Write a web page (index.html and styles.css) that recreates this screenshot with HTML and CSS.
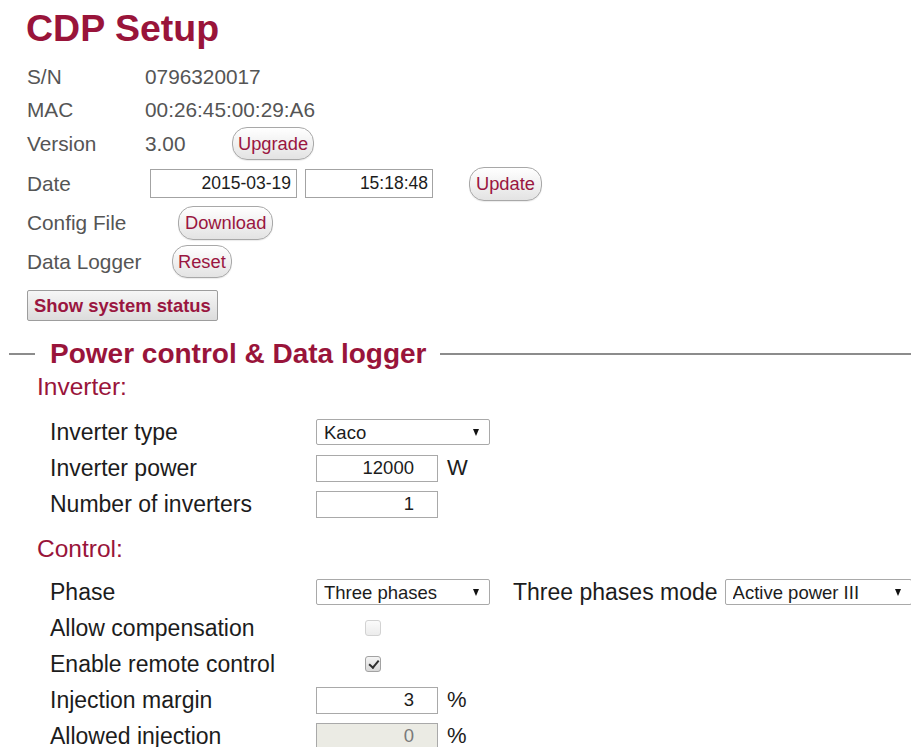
FILE: index.html
```html
<!DOCTYPE html>
<html lang="en">
<head>
<meta charset="utf-8">
<title>CDP Setup</title>
<link rel="stylesheet" href="styles.css">
</head>
<body>
<div class="setup">
  <h1 class="title">CDP Setup</h1>

  <div class="info">
    <div class="info-row">
      <span class="info-label">S/N</span>
      <span class="info-value">0796320017</span>
    </div>
    <div class="info-row">
      <span class="info-label">MAC</span>
      <span class="info-value">00:26:45:00:29:A6</span>
    </div>
    <div class="info-row">
      <span class="info-label">Version</span>
      <span class="info-value version-value">3.00</span>
      <button class="pill pill-short" type="button">Upgrade</button>
    </div>
  </div>

  <div class="actions">
    <div class="action-row">
      <span class="info-label label-date">Date</span>
      <input class="date-field date-day" type="text" value="2015-03-19">
      <input class="date-field date-time" type="text" value="15:18:48">
      <button class="pill pill-update" type="button">Update</button>
    </div>
    <div class="action-row">
      <span class="info-label label-config">Config File</span>
      <button class="pill" type="button">Download</button>
    </div>
    <div class="action-row">
      <span class="info-label label-logger">Data Logger</span>
      <button class="pill pill-short" type="button">Reset</button>
    </div>
  </div>

  <button class="status-btn" type="button">Show system status</button>
</div>

<fieldset class="panel">
  <legend class="panel-title">Power control &amp; Data logger</legend>

  <h3 class="group-title">Inverter:</h3>
  <div class="form-grid">
    <span class="field-label">Inverter type</span>
    <span class="field-control">
      <span class="select-wrap">
        <select class="select">
          <option>Kaco</option>
        </select>
      </span>
    </span>

    <span class="field-label">Inverter power</span>
    <span class="field-control">
      <input class="num-field" type="text" value="12000">
      <span class="unit">W</span>
    </span>

    <span class="field-label">Number of inverters</span>
    <span class="field-control">
      <input class="num-field" type="text" value="1">
    </span>
  </div>

  <h3 class="group-title group-gap">Control:</h3>
  <div class="form-grid form-grid-tight">
    <span class="field-label">Phase</span>
    <span class="field-control">
      <span class="select-wrap">
        <select class="select">
          <option>Three phases</option>
        </select>
      </span>
      <span class="inline-label">Three phases mode</span>
      <span class="select-wrap">
        <select class="select select-wide">
          <option>Active power III</option>
        </select>
      </span>
    </span>

    <span class="field-label">Allow compensation</span>
    <span class="field-control">
      <input class="check" type="checkbox" disabled>
    </span>

    <span class="field-label">Enable remote control</span>
    <span class="field-control">
      <input class="check" type="checkbox" checked>
    </span>

    <span class="field-label">Injection margin</span>
    <span class="field-control">
      <input class="num-field" type="text" value="3">
      <span class="unit">%</span>
    </span>

    <span class="field-label">Allowed injection</span>
    <span class="field-control">
      <input class="num-field" type="text" value="0" disabled>
      <span class="unit">%</span>
    </span>
  </div>
</fieldset>
</body>
</html>
```

FILE: styles.css
```css
html,
body {
  margin: 0;
  overflow: hidden;
  background: #ffffff;
}

body {
  font-family: "Liberation Sans", Arial, sans-serif;
  color: #1c1c1c;
  width: 911px;
}

/* ---------- device header ---------- */

.setup {
  padding-left: 27px;
}

.title {
  margin: 8px 0 0 -1px;
  font-size: 37.5px;
  line-height: 40px;
  font-weight: bold;
  color: #99143a;
}

.info {
  margin-top: 12px;
}

.info-row {
  display: flex;
  align-items: center;
  height: 33.5px;
}

.actions {
  margin-top: 3.5px;
}

.action-row {
  display: flex;
  align-items: center;
  height: 39px;
}

.info-label,
.info-value {
  font-size: 20.8px;
  color: #555555;
  white-space: nowrap;
}

.info-label {
  width: 118px;
  flex: none;
}

.version-value {
  width: 87px;
}

.label-date {
  width: 123px;
}

.label-config {
  width: 151px;
}

.label-logger {
  width: 145px;
}

.pill {
  height: 34px;
  padding: 0 6px;
  border: 1px solid #a8a8a8;
  border-radius: 15px;
  background: linear-gradient(#ffffff, #e3e3e3);
  box-shadow: 0 1px 1px rgba(0, 0, 0, 0.08);
  font-family: "Liberation Sans", Arial, sans-serif;
  font-size: 18.3px;
  color: #9a1640;
  cursor: pointer;
}

.pill-short {
  height: 33px;
  padding: 0 5px;
}

.pill-update {
  margin-left: 36px;
}

.date-field {
  box-sizing: border-box;
  height: 29px;
  padding: 0 5px;
  border: 1px solid #a3a3a3;
  font-family: "Liberation Sans", Arial, sans-serif;
  font-size: 17.5px;
  color: #1c1c1c;
  text-align: right;
}

.date-day {
  width: 147px;
}

.date-time {
  width: 128px;
  margin-left: 8px;
  padding-right: 4px;
}

.status-btn {
  display: block;
  height: 31px;
  margin-top: 9px;
  padding: 0 6px;
  border: 1px solid #9d9d9d;
  border-radius: 2px;
  background: linear-gradient(#f6f6f6, #dcdcdc);
  font-family: "Liberation Sans", Arial, sans-serif;
  font-size: 18.4px;
  font-weight: bold;
  color: #9a1640;
}

/* ---------- power control panel ---------- */

.panel {
  min-width: 0;
  margin: 18px 0 0 9px;
  padding: 0 0 0 28px;
  border: 0;
  border-top: 2px solid #8c8c8c;
}

.panel-title {
  margin-left: -2px;
  padding: 0 13px 0 15px;
  font-size: 28px;
  line-height: 30px;
  font-weight: bold;
  color: #99143a;
}

.group-title {
  margin: 0;
  font-size: 24.5px;
  line-height: 36px;
  font-weight: normal;
  color: #99143a;
}

.group-gap {
  margin-top: 9px;
}

.form-grid {
  display: grid;
  grid-template-columns: 266px 1fr;
  grid-auto-rows: 36px;
  align-items: center;
  margin: 9px 0 0 13px;
  white-space: nowrap;
}

.form-grid-tight {
  margin-top: 7px;
}

.field-label {
  font-size: 23px;
  color: #1c1c1c;
}

.field-control {
  display: flex;
  align-items: center;
}

.select-wrap {
  position: relative;
  display: inline-block;
  flex: none;
}

.select-wrap::after {
  content: "";
  position: absolute;
  right: 11px;
  top: 50%;
  margin-top: -3px;
  border-left: 3.5px solid transparent;
  border-right: 3.5px solid transparent;
  border-top: 7px solid #111111;
  pointer-events: none;
}

.select {
  appearance: none;
  -webkit-appearance: none;
  display: block;
  box-sizing: border-box;
  width: 174px;
  height: 26px;
  padding: 0 0 0 7px;
  border: 1px solid #a9a9a9;
  border-radius: 2px;
  background: #ffffff;
  font-family: "Liberation Sans", Arial, sans-serif;
  font-size: 18.5px;
  color: #1c1c1c;
}

.select-wide {
  width: 187px;
}

.inline-label {
  margin: 0 7px 0 23px;
  font-size: 23px;
  color: #1c1c1c;
}

.num-field {
  box-sizing: border-box;
  width: 122px;
  height: 27px;
  padding: 0 23px 0 4px;
  border: 1px solid #a9a9a9;
  background: #ffffff;
  font-family: "Liberation Sans", Arial, sans-serif;
  font-size: 18.5px;
  color: #1c1c1c;
  text-align: right;
}

.num-field:disabled {
  background: #ebebe4;
  color: #7a7a7a;
}

.unit {
  margin-left: 9px;
  font-size: 22px;
  color: #1c1c1c;
}

.check {
  appearance: none;
  -webkit-appearance: none;
  position: relative;
  box-sizing: border-box;
  width: 16px;
  height: 16px;
  margin: 0 0 0 49px;
  border: 1px solid #a2a2a2;
  border-radius: 3px;
  background: linear-gradient(#f4f4f4, #d8d8d8);
}

.check:disabled {
  border-color: #d2d2d2;
  background: linear-gradient(#fbfbfb, #ececec);
}

.check:checked::after {
  content: "";
  position: absolute;
  left: 4.5px;
  top: 1px;
  width: 3.5px;
  height: 8px;
  border: solid #2e2e2e;
  border-width: 0 2.5px 2.5px 0;
  transform: rotate(40deg);
}
```
